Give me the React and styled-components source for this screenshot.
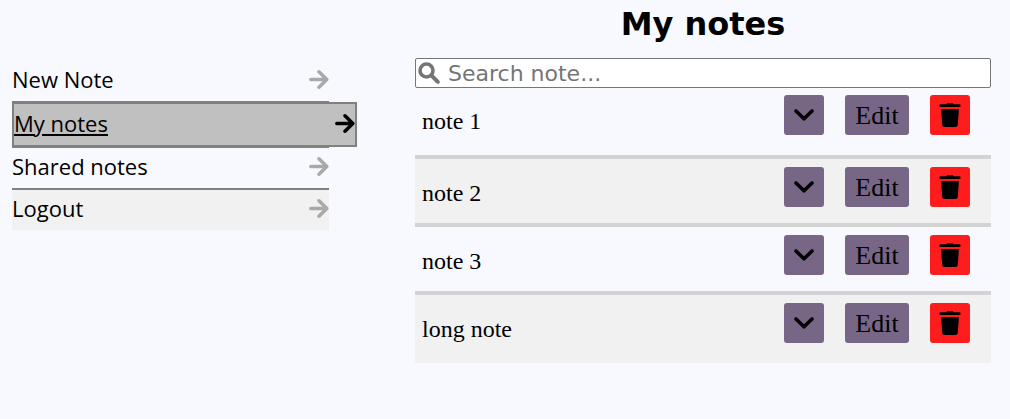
import React from "react";
import styled, { createGlobalStyle, css } from "styled-components";

const GlobalStyle = createGlobalStyle`
  *, *::before, *::after { box-sizing: border-box; }
  body {
    margin: 0;
    background: #f8f9ff;
    color: #000;
    font-family: "Liberation Serif", serif;
  }
`;

const Page = styled.div`
  display: grid;
  grid-template-columns: 317fr 576fr;
  column-gap: 86px;
  padding: 0 19px 0 12px;
`;

const Nav = styled.nav`
  padding-top: 61px;
  font-family: "Open Sans", sans-serif;
  font-size: 22px;
`;

const NavList = styled.ul`
  list-style: none;
  margin: 0;
  padding: 0;
`;

const NavItem = styled.li`
  border-bottom: 2px solid #808080;

  &:last-child {
    border-bottom: none;
    background: #f1f1f1;
  }
`;

const NavLink = styled.a`
  display: flex;
  align-items: center;
  justify-content: space-between;
  height: 40px;
  padding-bottom: 4px;
  color: #000;
  text-decoration: none;

  svg {
    color: #a9a9a9;
  }

  ${({ $active }) =>
    $active &&
    css`
      position: relative;
      width: calc(100% + 28px);
      height: 45px;
      margin: -1px 0;
      border: 2px solid #808080;
      background: #c0c0c0;
      text-decoration: underline;

      svg {
        color: #000;
      }
    `}
`;

const Main = styled.main`
  min-width: 0;
`;

const Title = styled.h1`
  margin: 0;
  height: 58px;
  padding-top: 4px;
  font: bold 32px/40px "DejaVu Sans", sans-serif;
  text-align: center;
`;

const SearchBox = styled.label`
  display: flex;
  align-items: center;
  gap: 8px;
  height: 30px;
  padding: 0 2px;
  border: 1px solid #767676;
  border-radius: 2px;
  background: #fff;
  color: #757575;

  svg {
    flex: none;
  }
`;

const SearchInput = styled.input`
  flex: 1;
  min-width: 0;
  height: 28px;
  padding: 1px 0;
  border: none;
  outline: none;
  background: transparent;
  font: 22px/26px "DejaVu Sans", sans-serif;

  &::placeholder {
    color: #757575;
    opacity: 1;
  }
`;

const NoteList = styled.ul`
  list-style: none;
  margin: 0;
  padding: 0;
`;

const Note = styled.li`
  display: flex;
  align-items: flex-start;
  min-height: 68px;
  padding: 8px 21px 0 7px;
  border-bottom: 4px solid #d3d3d3;

  &:first-child {
    min-height: 71px;
    padding-top: 7px;
  }

  &:nth-child(even) {
    background: #f1f1f1;
  }

  &:last-child {
    border-bottom: none;
  }
`;

const NoteName = styled.span`
  flex: 1;
  padding-top: 12px;
  font-size: 24px;
  line-height: 28px;
`;

const Actions = styled.div`
  display: flex;
  gap: 21px;
`;

const Button = styled.button`
  display: flex;
  align-items: center;
  justify-content: center;
  width: ${({ $wide }) => ($wide ? "64px" : "40px")};
  height: 40px;
  padding: ${({ $wide }) => ($wide ? "2px 0 0" : "0")};
  border: none;
  border-radius: 3px;
  background: ${({ $danger }) => ($danger ? "#ff1c1c" : "#776685")};
  color: #000;
  font: 26px/32px "Liberation Serif", serif;
  cursor: pointer;
`;

const strokeProps = {
  fill: "none",
  stroke: "currentColor",
  strokeLinecap: "round",
  strokeLinejoin: "round",
  "aria-hidden": true,
};

const ArrowIcon = () => (
  <svg width="20" height="20" viewBox="0 0 20 20" strokeWidth="3.5" {...strokeProps}>
    <path d="M1.8 10.5H17M10 2.8L17.8 10.5L10 18.2" />
  </svg>
);

const ChevronIcon = () => (
  <svg width="20" height="20" viewBox="0 0 20 20" strokeWidth="3.6" {...strokeProps}>
    <path d="M2 6L10 13.8L18 6" />
  </svg>
);

const SearchIcon = () => (
  <svg width="22" height="22" viewBox="0 0 22 22" strokeWidth="3.6" {...strokeProps}>
    <circle cx="8.5" cy="8.5" r="6.5" />
    <path d="M13.6 13.6L19.8 19.8" strokeWidth="4" strokeLinecap="butt" />
    <path d="M19.2 19.2L20 20" strokeWidth="3.6" />
  </svg>
);

const TrashIcon = () => (
  <svg width="22" height="24" viewBox="0 0 22 24" fill="currentColor" aria-hidden="true">
    <path d="M7.4 1.3Q7.7.2 8.8.2H13.2Q14.3.2 14.6 1.3H20.6Q21.5 1.3 21.5 2.2V3.2Q21.5 4 20.6 4H1.4Q.5 4 .5 3.2V2.2Q.5 1.3 1.4 1.3Z" />
    <path d="M2.1 6H19.9L18.8 21.8Q18.6 24 16.4 24H5.6Q3.4 24 3.2 21.8Z" />
  </svg>
);

const links = ["New Note", "My notes", "Shared notes", "Logout"];
const notes = ["note 1", "note 2", "note 3", "long note"];

export default function App() {
  return (
    <>
      <GlobalStyle />
      <Page>
        <Nav>
          <NavList>
            {links.map((label) => (
              <NavItem key={label}>
                <NavLink href="#" $active={label === "My notes"}>
                  {label}
                  <ArrowIcon />
                </NavLink>
              </NavItem>
            ))}
          </NavList>
        </Nav>
        <Main>
          <Title>My notes</Title>
          <SearchBox>
            <SearchIcon />
            <SearchInput type="text" placeholder="Search note..." aria-label="Search note" />
          </SearchBox>
          <NoteList>
            {notes.map((name) => (
              <Note key={name}>
                <NoteName>{name}</NoteName>
                <Actions>
                  <Button aria-label={`Expand ${name}`}>
                    <ChevronIcon />
                  </Button>
                  <Button $wide>Edit</Button>
                  <Button $danger aria-label={`Delete ${name}`}>
                    <TrashIcon />
                  </Button>
                </Actions>
              </Note>
            ))}
          </NoteList>
        </Main>
      </Page>
    </>
  );
}
